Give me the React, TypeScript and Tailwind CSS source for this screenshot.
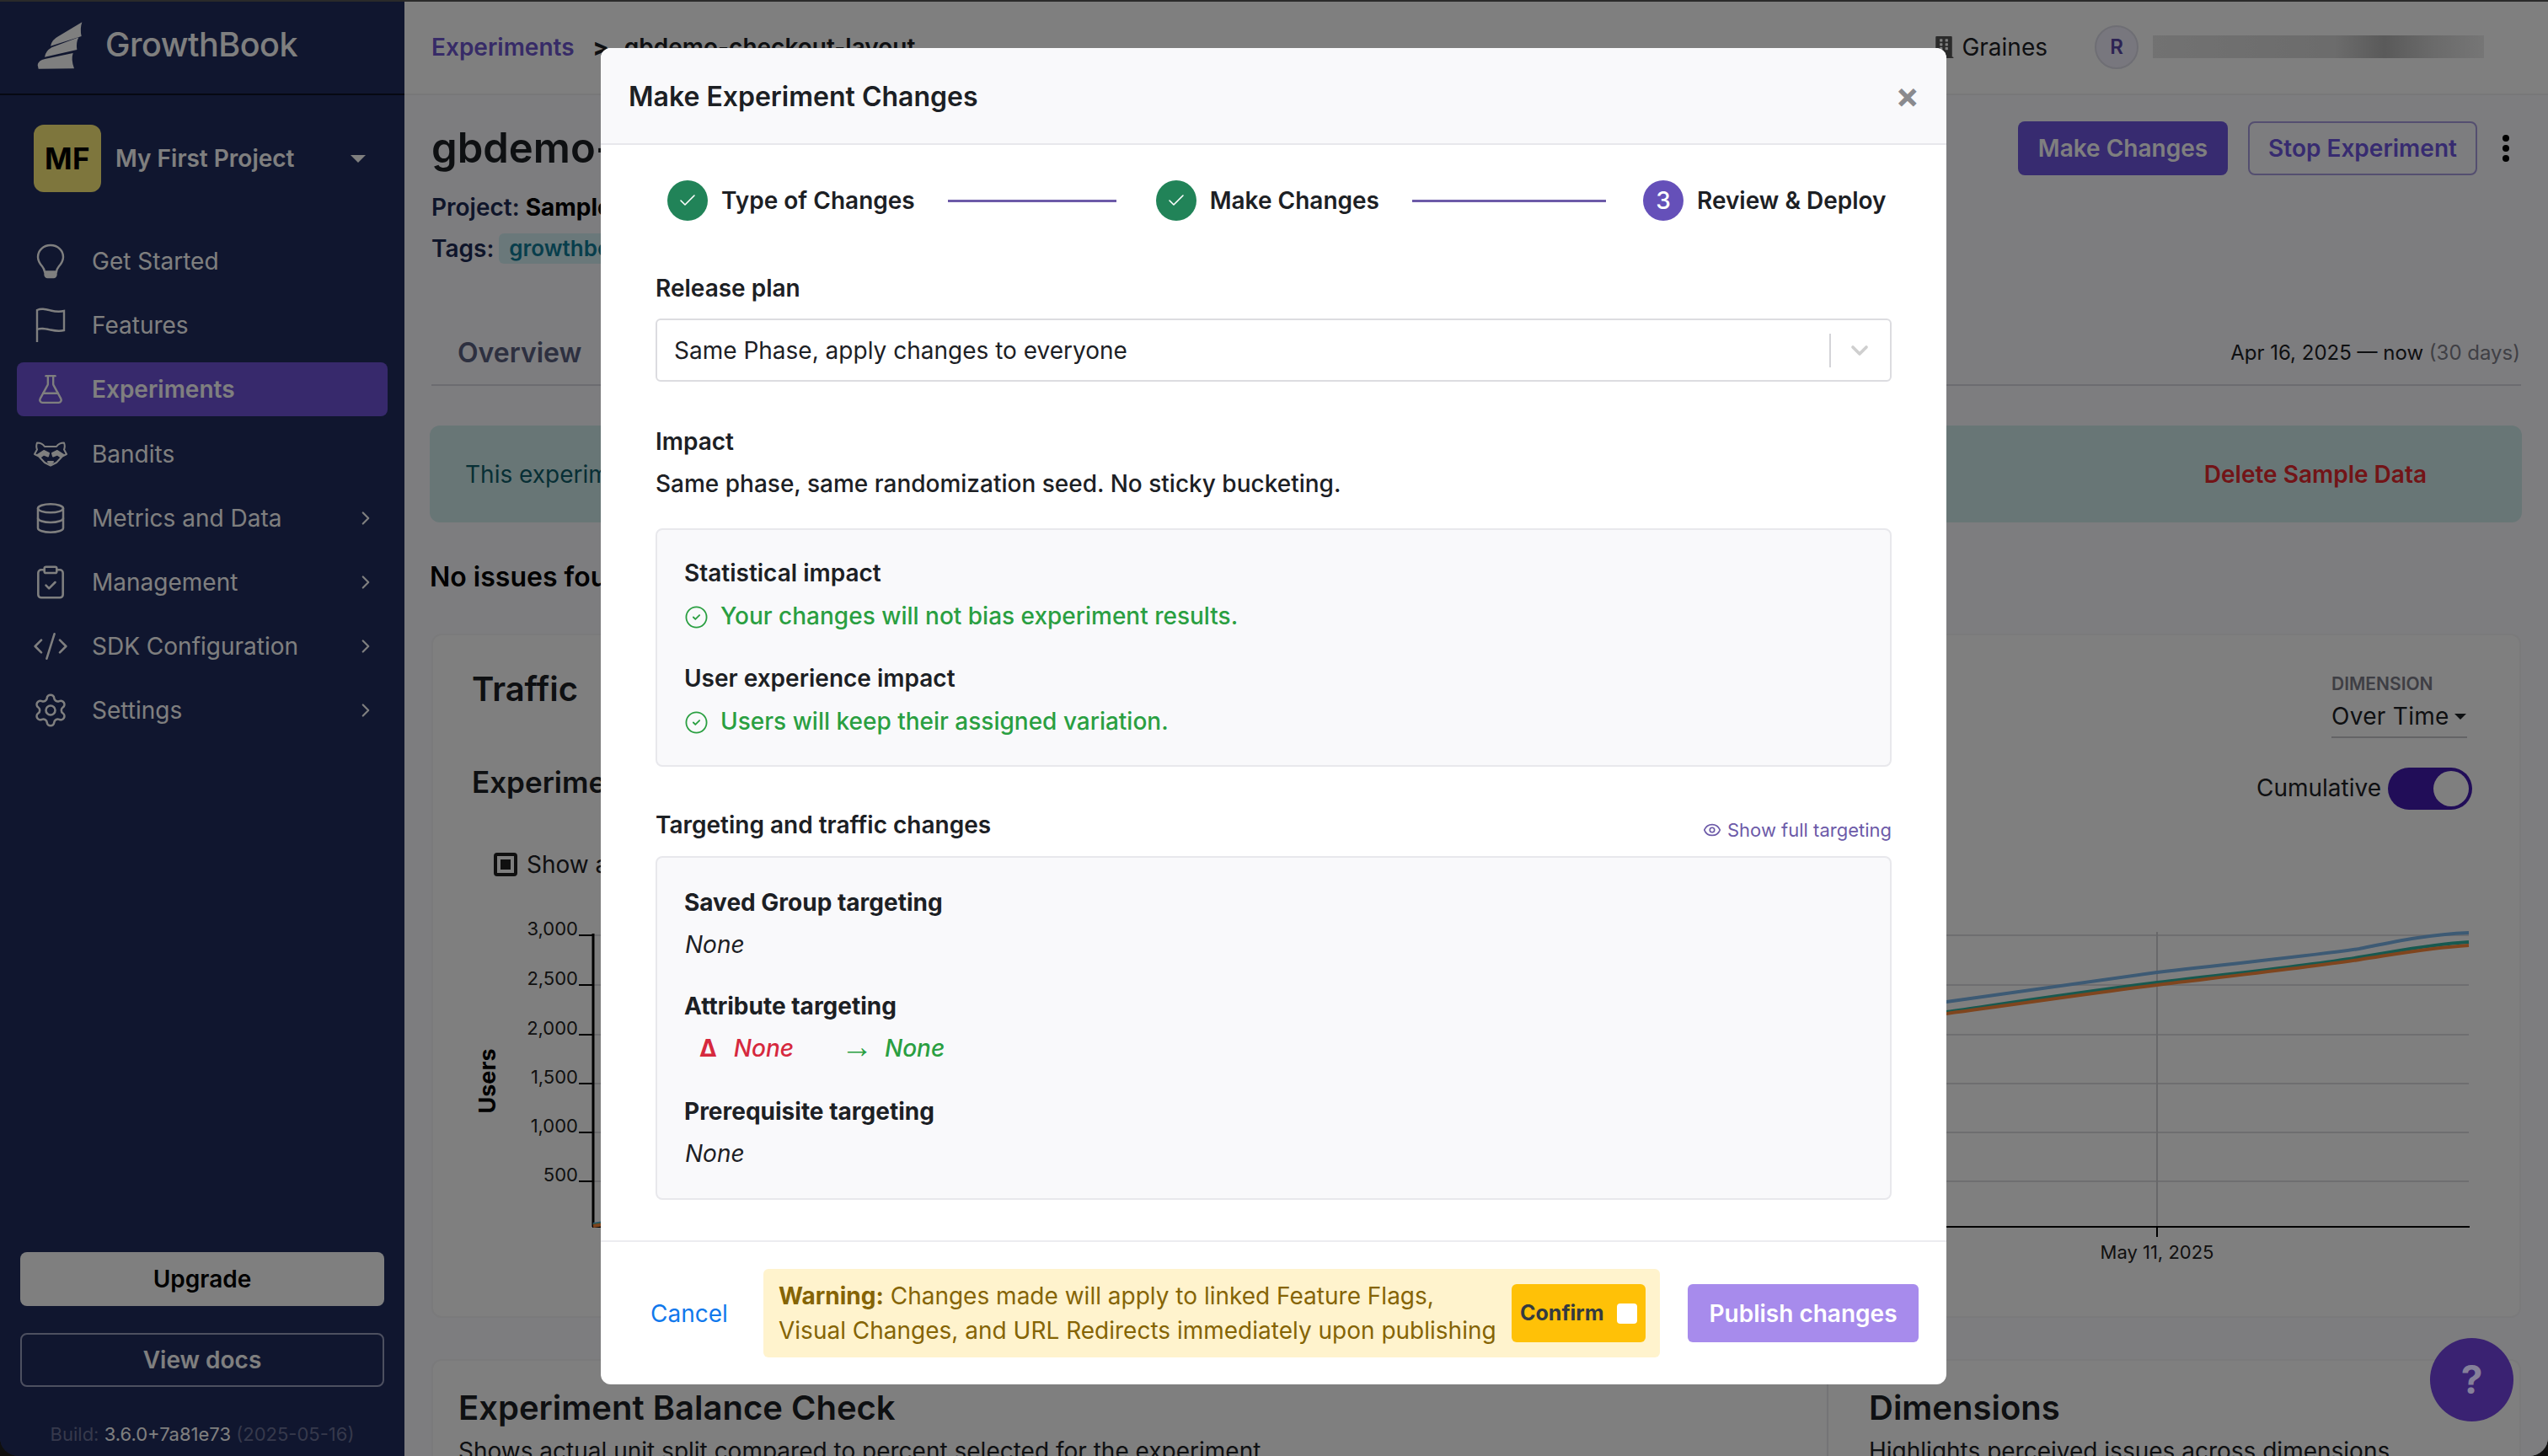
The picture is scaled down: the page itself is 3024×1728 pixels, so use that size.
import {
  Check,
  ChevronDown,
  ChevronRight,
  CircleCheck,
  ClipboardCheck,
  CodeXml,
  Database,
  Eye,
  FlaskConical,
  Settings,
} from "lucide-react";
import type { ReactNode } from "react";
import { FaBuilding } from "react-icons/fa";

const BulbIcon = () => (
  <svg width="34" height="42" viewBox="0 0 34 42" fill="none" stroke="currentColor" strokeWidth="2.4">
    <path d="M17 2C8.5 2 2 8.2 2 16c0 4.6 2.2 7.8 5 11 1.6 1.9 2.6 4.2 3 6.5h14c.4-2.3 1.4-4.6 3-6.5 2.8-3.200 5-6.400 5-11C32 8.200 25.500 2 17 2Z" />
    <path d="M10.500 34.500h13v2.500a3 3 0 0 1-3 3h-7a3 3 0 0 1-3-3Z" fill="currentColor" />
  </svg>
);

const FlagIcon = () => (
  <svg width="36" height="42" viewBox="0 0 36 42" fill="none" stroke="currentColor" strokeWidth="2.4">
    <path d="M2 41V3c5-2.200 9-1.200 16 .5 6 1.400 10 2 16 .5v23c-6 1.500-10 .8-16-.5-7-1.500-11-2.500-16-.5" />
  </svg>
);

const RaccoonIcon = () => (
  <svg width="40" height="30" viewBox="0 0 40 30" fill="none" stroke="currentColor" strokeWidth="2" strokeLinejoin="round">
    <path d="M4 1.500c3.500 0 7 1.500 9 4.500h14c2-3 5.500-4.500 9-4.500 1 2.500 1 5.500 0 8l3 5.500-5 2.500-7 7.500-7 3.500-7-3.500-7-7.500-5-2.500 3-5.500c-1-2.500-1-5.500 0-8Z" />
    <path d="M5 15.500 12 11l6 3-1 3.500-5-2-4 3ZM35 15.500 28 11l-6 3 1 3.500 5-2 4 3Z" fill="currentColor" />
    <path d="M17 24h6l-3 3Z" fill="currentColor" />
  </svg>
);

const navItems: { label: string; icon: ReactNode; active?: boolean; more?: boolean }[] = [
  { label: "Get Started", icon: <BulbIcon /> },
  { label: "Features", icon: <FlagIcon /> },
  { label: "Experiments", icon: <FlaskConical size={38} strokeWidth={1.5} />, active: true },
  { label: "Bandits", icon: <RaccoonIcon /> },
  { label: "Metrics and Data", icon: <Database size={40} strokeWidth={1.5} />, more: true },
  { label: "Management", icon: <ClipboardCheck size={44} strokeWidth={1.4} />, more: true },
  { label: "SDK Configuration", icon: <CodeXml size={44} strokeWidth={1.4} />, more: true },
  { label: "Settings", icon: <Settings size={44} strokeWidth={1.4} />, more: true },
];

const Caret = ({ className }: { className: string }) => (
  <svg className={className} viewBox="0 0 16 8" fill="currentColor">
    <path d="M0 0h16L8 8Z" />
  </svg>
);

const Sidebar = () => (
  <aside className="flex h-full w-[480px] shrink-0 flex-col bg-[#202c5e] text-white">
    <div className="flex h-[113px] shrink-0 items-center border-b-2 border-[#0c1024] pl-[44px]">
      <svg width="54" height="58" viewBox="130 60 162 170" fill="currentColor" className="-mt-[4px] text-[#fff]">
        <path d="M135 228 132 215Q135 197 158 193L258 172Q250 195 262 227Z" />
        <path d="M157 186Q160 165 182 152L278 116Q268 135 272 160Z" />
        <path d="M178 147Q182 125 205 113L290 62Q282 85 288 112Z" />
      </svg>
      <span className="ml-[27px] -mt-[4px] text-[39.5px] font-medium tracking-[-0.5px]">GrowthBook</span>
    </div>
    <div className="mt-[35px] flex h-[80px] shrink-0 items-center pl-[40px] pr-[46px]">
      <div className="flex h-[80px] w-[80px] items-center justify-center rounded-[12px] bg-[#fdec7a] text-[35px] font-bold tracking-[0.5px] text-black">
        MF
      </div>
      <span className="ml-[17px] flex-1 text-[28px] font-semibold">My First Project</span>
      <Caret className="h-[9px] w-[18px]" />
    </div>
    <nav className="mt-[50px] flex flex-col gap-[12.2px] px-[20px]">
      {navItems.map((item) => (
        <div
          key={item.label}
          className={`flex h-[64px] items-center rounded-[8px] pl-[17px] pr-[13px] text-[28px] ${
            item.active ? "bg-[#6e52d8] font-semibold" : ""
          }`}
        >
          <span className="flex w-[46px] items-center justify-center">{item.icon}</span>
          <span className="ml-[26px] flex-1">{item.label}</span>
          {item.more && <ChevronRight size={26} strokeWidth={2} />}
        </div>
      ))}
    </nav>
    <div className="mt-auto flex flex-col px-[24px] pb-[12px]">
      <button className="h-[64px] rounded-[8px] bg-white text-[28px] font-semibold text-black">Upgrade</button>
      <button className="mt-[32px] h-[64px] rounded-[8px] border-2 border-[#9aa0c0] text-[28px] font-semibold text-white">
        View docs
      </button>
      <p className="mt-[42px] text-center text-[22px] leading-[28px] text-[#6c7398]">
        Build: <span className="text-white">3.6.0+7a81e73</span> (2025-05-16)
      </p>
    </div>
  </aside>
);

const ExperimentPage = () => (
  <main className="flex h-full min-w-0 flex-1 flex-col bg-[#fafaff] text-[#1c2024]">
    <div className="flex h-[113px] shrink-0 items-center border-b-2 border-[#f0f0f3] bg-white pl-[32px] pr-[76px] text-[28px]">
      <span className="font-semibold text-[#6e56cf]">Experiments</span>
      <span className="ml-[22px] font-extrabold">&gt;</span>
      <span className="ml-[18px] font-semibold">gbdemo-checkout-layout</span>
      <div className="ml-auto flex items-center">
        <FaBuilding size={26} className="mr-[8px] text-[#555]" />
        <span>Graines</span>
        <span className="ml-[56px] flex h-[52px] w-[52px] items-center justify-center rounded-full border-2 border-[#dddde8] bg-[#f1eefc] text-[24px] font-semibold text-[#5b48a8]">
          R
        </span>
        <span className="ml-[17px] h-[27px] w-[393px] bg-[linear-gradient(90deg,#e4e4e4,#d8d8d8_55%,#b4b4b4_70%,#d6d6d6_85%,#ececec)]" />
      </div>
    </div>
    <div className="flex flex-col pl-[32px] pr-[32px]">
      <div className="flex items-start justify-between pt-[31px]">
        <div>
          <h1 className="text-[49px] font-semibold leading-[64px]">gbdemo-checkout-layout</h1>
          <p className="mt-[18px] text-[28px] font-semibold leading-[40px] text-[#1d2a55]">
            Project: <span className="font-bold text-black">Sample Data</span>
          </p>
          <div className="mt-[9px] flex items-center text-[28px] font-semibold leading-[40px] text-[#1d2a55]">
            Tags:
            <span className="ml-[6px] rounded-[6px] bg-[#d5f1f5] px-[12px] text-[26px] leading-[36px] text-[#107d98]">
              growthbook
            </span>
          </div>
        </div>
        <div className="flex items-center">
          <button className="h-[64px] w-[249px] rounded-[8px] bg-[#6e56e0] text-[28px] font-semibold text-white">
            Make Changes
          </button>
          <button className="ml-[24px] h-[64px] w-[272px] rounded-[8px] border-2 border-[#a99de0] text-[28px] font-semibold text-[#6e56e0]">
            Stop Experiment
          </button>
          <span className="ml-[30px] mr-[14px] flex flex-col gap-[4px]">
            <i className="block h-[8px] w-[8px] rounded-full bg-black" />
            <i className="block h-[8px] w-[8px] rounded-full bg-black" />
            <i className="block h-[8px] w-[8px] rounded-full bg-black" />
          </span>
        </div>
      </div>
      <div className="mt-[67px] flex h-[76px] items-center justify-between border-b-2 border-[#d9d9e0] pr-[1px]">
        <span className="pl-[31px] text-[32px] font-semibold text-[#5a6080]">Overview</span>
        <span className="text-[24px]">
          Apr 16, 2025 — now <span className="text-[#80808a]">(30 days)</span>
        </span>
      </div>
      <div className="-ml-[2px] -mr-[1px] mt-[47px] flex h-[115px] items-center justify-between rounded-[12px] bg-[#d0ecec] pl-[42px] pr-[113px] text-[28px]">
        <span className="text-[#0e5f6b]">This experiment is sample data.</span>
        <span className="font-semibold text-[#e5282e]">Delete Sample Data</span>
      </div>
      <p className="-ml-[2px] mt-[45px] text-[32px] font-semibold leading-[40px] text-black">No issues found</p>
      <section className="mt-[47px] h-[812px] shrink-0 rounded-[12px] border-2 border-[#f4f4f6] bg-white">
        <div className="flex items-start justify-between pl-[46px] pr-[62px] pt-[36px]">
          <h2 className="text-[40px] font-semibold leading-[56px]">Traffic</h2>
          <div className="mt-[9px] w-[161px] border-b-2 border-[#c8c8cc] pb-[2px]">
            <p className="text-[21px] font-semibold leading-[26px] text-[#7c7c88]">DIMENSION</p>
            <p className="mt-[3px] flex items-center justify-between text-[28px] leading-[44px] tracking-[0.3px]">
              Over Time
              <Caret className="h-[7px] w-[16px]" />
            </p>
          </div>
        </div>
        <div className="mt-[27px] flex h-[58px] items-start justify-between pl-[46px] pr-[56px]">
          <h3 className="text-[35px] font-semibold leading-[50px]">Experiment Traffic</h3>
          <div className="mt-[6px] flex items-center text-[28px]">
            Cumulative
            <span className="ml-[8px] mt-[2px] flex h-[50px] w-[100px] items-center justify-end rounded-full bg-[#421ab0] pr-[4px]">
              <i className="block h-[42px] w-[42px] rounded-full bg-white" />
            </span>
          </div>
        </div>
        <div className="ml-[72px] mt-[45px] flex h-[40px] items-center text-[28px]">
          <span className="flex h-[28px] w-[28px] items-center justify-center rounded-[4px] border-[4px] border-[#202020]">
            <i className="block h-[12px] w-[12px] bg-[#202020]" />
          </span>
          <span className="ml-[11px]">Show all</span>
        </div>
        <TrafficChart />
      </section>
      <section className="mt-[49px] flex h-[200px] shrink-0 rounded-[12px] border-2 border-[#f4f4f6] bg-white">
        <div className="w-[1656px] shrink-0 border-r-2 border-[#e8e8ec] pl-[30px] pt-[31px]">
          <h2 className="text-[40px] font-semibold leading-[50px]">Experiment Balance Check</h2>
          <p className="mt-[6px] text-[28px] leading-[40px]">
            Shows actual unit split compared to percent selected for the experiment
          </p>
        </div>
        <div className="pl-[48px] pt-[31px]">
          <h2 className="text-[40px] font-semibold leading-[50px]">Dimensions</h2>
          <p className="mt-[6px] text-[28px] leading-[40px]">Highlights perceived issues across dimensions</p>
        </div>
      </section>
    </div>
  </main>
);

const gridYs = [1110, 1169, 1228, 1286, 1344, 1402];
const yLabels = ["3,000", "2,500", "2,000", "1,500", "1,000", "500"];

// same numbers as the page, the viewBox starts at the card corner
const TrafficChart = () => (
  <svg width="2476" height="420" viewBox="514 1090 2476 420" className="mt-[44px] block">
    {gridYs.map((y, i) => (
      <g key={y}>
        <line x1="704" x2="2930" y1={y} y2={y} stroke="#dcdce0" strokeWidth="2" />
        <line x1="687" x2="704" y1={y} y2={y} stroke="#000" strokeWidth="2" />
        <text x="686" y={y} textAnchor="end" fontSize="22" fill="#222">
          {yLabels[i]}
        </text>
      </g>
    ))}
    <text x="0" y="0" transform="translate(588 1283) rotate(-90)" textAnchor="middle" fontSize="27" fontWeight="700" fill="#000">
      Users
    </text>
    <line x1="2560" x2="2560" y1="1106" y2="1456" stroke="#d0d0d4" strokeWidth="2" />
    <line x1="704" x2="704" y1="1108" y2="1456" stroke="#000" strokeWidth="3" />
    <line x1="703" x2="2931" y1="1456" y2="1456" stroke="#000" strokeWidth="2" />
    <line x1="2560" x2="2560" y1="1456" y2="1468" stroke="#000" strokeWidth="2" />
    <text x="2560" y="1494" textAnchor="middle" fontSize="22" fill="#222">
      May 11, 2025
    </text>
    <path d="M704 1453 2310 1189C2400 1176 2480 1165 2560 1154 2660 1142 2740 1135 2800 1126 2840 1118 2880 1109 2930 1107" fill="none" stroke="#7ab4e8" strokeWidth="4" />
    <path d="M704 1454 2310 1201C2400 1188 2480 1176 2560 1166 2660 1154 2740 1146 2800 1136 2840 1130 2880 1121 2930 1118" fill="none" stroke="#2fb3a0" strokeWidth="4" />
    <path d="M704 1455 2310 1203C2400 1191 2480 1179 2560 1169 2660 1157 2740 1148 2800 1139 2840 1133 2880 1125 2930 1122" fill="none" stroke="#ff8a3c" strokeWidth="4" />
  </svg>
);

const StepCircle = ({ done, n }: { done?: boolean; n?: number }) => (
  <span
    className={`flex h-[48px] w-[48px] shrink-0 items-center justify-center rounded-full text-[28px] font-medium text-white ${
      done ? "bg-[#218358]" : "bg-[#6550b9]"
    }`}
  >
    {done ? <Check size={24} strokeWidth={1.6} /> : n}
  </span>
);

const ImpactLine = ({ children }: { children: ReactNode }) => (
  <p className="mt-[13px] flex h-[40px] items-center gap-[14px] font-medium text-[#2a9f41]">
    <CircleCheck size={29} strokeWidth={1.5} className="mt-[3px] shrink-0" />
    {children}
  </p>
);

const MakeChangesModal = () => (
  <div className="absolute left-[713px] top-[57px] flex h-[1586px] w-[1597px] flex-col overflow-hidden rounded-[12px] bg-white text-[28px] text-[#1c2024]">
    <header className="flex h-[115px] shrink-0 items-center justify-between border-b-2 border-[#e8e8ec] bg-[#f9f9fb] pl-[33px] pr-[32px]">
      <h2 className="mt-[2px] text-[32px] font-semibold">Make Experiment Changes</h2>
      <span className="-mt-[2px] text-[42px] font-bold leading-none text-[#8a8a8e]">×</span>
    </header>
    <div className="flex-1 px-[65px]">
      <div className="mt-[42px] flex h-[48px] items-center pl-[14px] font-semibold">
        <StepCircle done />
        <span className="ml-[16px]">Type of Changes</span>
        <span className="ml-[39px] mr-[47px] h-[3px] w-[200px] bg-[#6c5aa8]" />
        <StepCircle done />
        <span className="ml-[16px]">Make Changes</span>
        <span className="ml-[39px] mr-[44px] h-[3px] w-[230px] bg-[#6c5aa8]" />
        <StepCircle n={3} />
        <span className="ml-[16px]">Review &amp; Deploy</span>
      </div>
      <p className="mt-[62px] font-semibold leading-[36px]">Release plan</p>
      <div className="mt-[18px] flex h-[75px] items-center rounded-[6px] border-2 border-[#dcdce0] pl-[20px] pr-[20px]">
        <span className="flex-1">Same Phase, apply changes to everyone</span>
        <span className="h-[40px] w-[2px] bg-[#d4d4d8]" />
        <ChevronDown size={32} strokeWidth={2.8} className="ml-[18px] text-[#cfcfcf]" />
      </div>
      <p className="mt-[53px] font-semibold leading-[36px]">Impact</p>
      <p className="mt-[14px] font-medium leading-[36px]">Same phase, same randomization seed. No sticky bucketing.</p>
      <div className="mt-[35px] flex h-[283px] flex-col justify-center rounded-[8px] border-2 border-[#e8e8ec] bg-[#f9f9fb] px-[32px]">
        <p className="font-semibold leading-[36px]">Statistical impact</p>
        <ImpactLine>Your changes will not bias experiment results.</ImpactLine>
        <p className="mt-[36px] font-semibold leading-[36px]">User experience impact</p>
        <ImpactLine>Users will keep their assigned variation.</ImpactLine>
      </div>
      <div className="mt-[51px] flex h-[55px] items-start justify-between">
        <p className="font-semibold leading-[36px]">Targeting and traffic changes</p>
        <span className="mt-[9px] flex items-center gap-[7px] text-[22px] leading-[30px] text-[#6c5aa8]">
          <Eye size={22} strokeWidth={1.8} />
          Show full targeting
        </span>
      </div>
      <div className="flex h-[408px] flex-col justify-center rounded-[8px] border-2 border-[#e8e8ec] bg-[#f9f9fb] px-[32px]">
        <p className="font-bold leading-[36px]">Saved Group targeting</p>
        <p className="mt-[14px] pl-[1px] italic leading-[36px]">None</p>
        <p className="mt-[37px] font-bold leading-[36px]">Attribute targeting</p>
        <div className="mt-[14px] flex h-[36px] items-center pl-[18px] font-medium italic">
          <span className="text-[#d6293e]">
            <span className="mr-[20px] font-bold not-italic">Δ</span>None
          </span>
          <span className="ml-[56px] flex items-center text-[#2a9f41]">
            <span className="-mt-[4px] mr-[14px] font-['Liberation_Sans'] text-[38px] not-italic leading-none">→</span>None
          </span>
        </div>
        <p className="mt-[39px] font-bold leading-[36px]">Prerequisite targeting</p>
        <p className="mt-[14px] pl-[1px] italic leading-[36px]">None</p>
      </div>
    </div>
    <footer className="flex h-[171px] shrink-0 items-center border-t-2 border-[#ececf0] pl-[59px] pr-[33px]">
      <span className="w-[134px] shrink-0 text-[#1078ec]">Cancel</span>
      <div className="flex h-[105px] w-[1064px] shrink-0 items-center rounded-[6px] bg-[#fff3cd] pl-[18px] pr-[17px] text-[28px] leading-[41px] text-[#856404]">
        <p className="flex-1">
          <b className="font-bold">Warning:</b> Changes made will apply to linked Feature Flags,
          <br />
          Visual Changes, and URL Redirects immediately upon publishing
        </p>
        <span className="flex h-[69px] w-[159px] shrink-0 items-center justify-between rounded-[6px] bg-[#ffc107] pl-[10px] pr-[10px] text-[25px] font-bold text-[#343a40]">
          Confirm
          <i className="block h-[24px] w-[24px] rounded-[4px] bg-white" />
        </span>
      </div>
      <button className="ml-[33px] h-[69px] flex-1 rounded-[6px] bg-[#a78bec] font-semibold text-white">
        Publish changes
      </button>
    </footer>
  </div>
);

export default function App() {
  return (
    <div className="h-[1728px] w-[3024px] overflow-hidden bg-[#101010] font-[Inter,sans-serif]">
      <div className="relative flex h-full w-full overflow-hidden rounded-b-[22px]">
        <Sidebar />
        <ExperimentPage />
        <div className="absolute inset-0 border-t-2 border-[#2a2a2a] bg-black/50" />
        <span className="absolute left-[2884px] top-[1588px] flex h-[99px] w-[99px] items-center justify-center rounded-full bg-[#3a2272] text-[46px] font-bold text-[#85809a]">
          ?
        </span>
        <MakeChangesModal />
      </div>
    </div>
  );
}
